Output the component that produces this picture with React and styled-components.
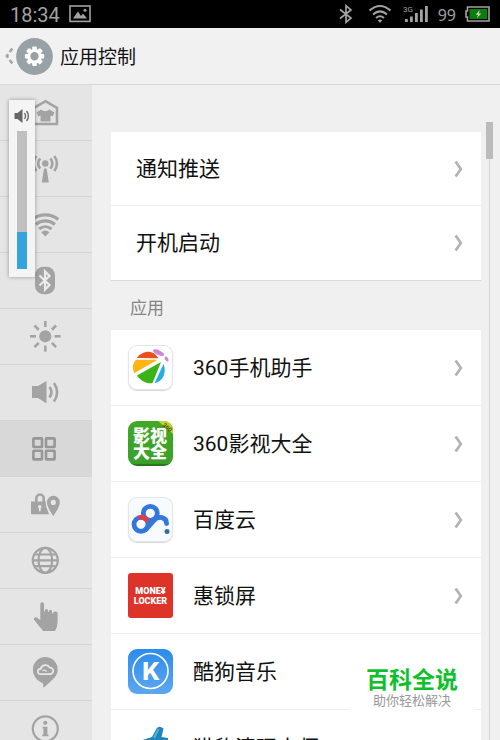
import React, { useState } from 'react'
import styled, { createGlobalStyle } from 'styled-components'

const GlobalStyle = createGlobalStyle`
    * {
        box-sizing: border-box;
    }
    body {
        margin: 0;
        background-color: #f0f0f0;
        font-family: Roboto, "Noto Sans CJK SC", sans-serif;
    }
    button {
        border: none;
        padding: 0;
        background: none;
        font: inherit;
        color: inherit;
        cursor: pointer;
    }
    svg {
        display: block;
        flex-shrink: 0;
    }
`

const Container = styled.div`
    position: relative;
    height: 100vh;
    display: flex;
    flex-direction: column;
    overflow: hidden;
`

const StatusBar = styled.div`
    height: 28px;
    flex-shrink: 0;
    padding: 0 10px;
    display: flex;
    align-items: center;
    justify-content: space-between;
    background-color: #000;
    color: #a2a2a2;
`

const StatusGroup = styled.div`
    display: flex;
    align-items: center;
    gap: ${props => props.gap};
`

const Clock = styled.span`
    padding-top: 2px;
    font-size: 20px;
    line-height: 26px;
`

const Percent = styled.span`
    padding-top: 2px;
    font-family: "Noto Sans", sans-serif;
    font-size: 16px;
    line-height: 26px;
`

const Header = styled.header`
    height: 57px;
    flex-shrink: 0;
    padding-left: 5px;
    display: flex;
    align-items: center;
    background-color: #f1f1f1;
    border-bottom: 1px solid #d8d8d8;
`

const BackButton = styled.button`
    display: flex;
    align-items: center;
    gap: 2px;
`

const Title = styled.h1`
    margin: 0;
    padding: 4px 0 0 7px;
    font-size: 19px;
    line-height: 28px;
    font-weight: 400;
    color: #111;
`

const Body = styled.div`
    flex: 1;
    min-height: 0;
    display: flex;
    overflow: hidden;
`

const Sidebar = styled.nav`
    width: 92px;
    flex-shrink: 0;
    background-color: #e5e5e5;
`

const SideButton = styled.button`
    width: 100%;
    height: 56px;
    padding-bottom: 1px;
    display: flex;
    align-items: center;
    justify-content: center;
    color: ${props => props.$active ? "#979797" : "#a3a3a3"};
    background-color: ${props => props.$active ? "#d8d8d8" : "transparent"};
    border-bottom: 1px solid #d5d5d5;
`

const Main = styled.main`
    flex: 1;
    min-width: 0;
    padding: 47px 0 0 19px;
`

const Card = styled.div`
    background-color: #fff;
    border-bottom: 1px solid #d9d9d9;
`

const Row = styled.button`
    width: 100%;
    height: ${props => props.$tall ? "76px" : "74px"};
    padding: ${props => props.$tall ? "0 18px 0 17px" : "0 18px 0 25px"};
    display: flex;
    align-items: center;
    gap: 20px;
    text-align: left;
    font-size: 21px;
    line-height: 30px;
    color: #111;

    &:not(:last-child) {
        border-bottom: 1px solid #ededed;
    }
`

const RowText = styled.span`
    flex: 1;
    white-space: nowrap;
`

const SectionTitle = styled.h2`
    margin: 0;
    padding: 5px 0 0 19px;
    font-size: 17px;
    line-height: 44px;
    font-weight: 400;
    color: #858585;
`

const ScrollTrack = styled.div`
    width: 19px;
    margin-top: 37px;
    padding-right: 2px;
    flex-shrink: 0;
    display: flex;
    flex-direction: column;
    align-items: center;
`

const ScrollThumb = styled.div`
    width: 7px;
    height: 37px;
    background-color: #bbb;
`

const ScrollLine = styled.div`
    width: 1px;
    flex: 1;
    background-color: #d6d6d6;
`

const AppIcon = styled.span`
    width: 45px;
    height: 45px;
    flex-shrink: 0;
    display: flex;
    flex-direction: column;
    align-items: center;
    justify-content: center;
    overflow: hidden;
    border-radius: ${props => props.$radius || "9px"};
    background: ${props => props.$bg};
    box-shadow: ${props => props.$outlined ? "inset 0 0 0 1px #e2e5ea, 0 1px 1px #d8d8d8" : "none"};
    color: #fff;
    font-size: 9px;
    line-height: 10px;
    font-weight: 900;
`

const VolumePanel = styled.div`
    position: absolute;
    left: 9px;
    top: 100px;
    width: 26px;
    height: 177px;
    padding-top: 8px;
    display: flex;
    flex-direction: column;
    align-items: center;
    gap: 7px;
    background-color: #f4f4f4;
    border-radius: 1px;
    box-shadow: 0 0 4px rgba(0, 0, 0, 0.35);
    color: #666;
`

const VolumeRange = styled.input`
    appearance: none;
    writing-mode: vertical-lr;
    direction: rtl;
    width: 10px;
    height: 138px;
    margin: 0;

    &::-webkit-slider-thumb {
        appearance: none;
        width: 10px;
        height: 1px;
        background: transparent;
    }
`

const Watermark = styled.div`
    position: absolute;
    right: 25px;
    bottom: 0;
    width: 126px;
    height: 80px;
    padding-top: 4px;
    background-color: #fff;
    text-align: center;
    font-family: "Noto Sans CJK SC", sans-serif;
    pointer-events: none;
`

const WatermarkTitle = styled.div`
    font-size: 23px;
    line-height: 28px;
    font-weight: 700;
    color: #0fbf2c;
`

const WatermarkText = styled.div`
    font-size: 13px;
    line-height: 16px;
    color: #999;
`

const stroke = { fill: "none", stroke: "currentColor", strokeWidth: 2.6 }

const sideIcons = [
    {
        id: "theme",
        label: "主题",
        icon: <>
            <path d="M16.5 5.2L28 12V28H5V12Z" {...stroke} />
            <path d="M12 13.5Q16.3 17 20.5 13.5L25.5 16.5L23.5 20.5L21.5 19.5V25.5H11.5V19.5L9.5 20.5L7.5 16.5Z" fill="currentColor" />
        </>
    },
    {
        id: "network",
        label: "移动网络",
        icon: <>
            <circle cx="16.3" cy="11.5" r="3.2" fill="currentColor" />
            <path d="M15 16.5H17.6L19.8 30.5H12.8Z" fill="currentColor" />
            <path d="M11.3 6.5A7 7 0 0 0 11.3 16.5M21.3 6.5A7 7 0 0 1 21.3 16.5M7.3 4A12 12 0 0 0 7.3 19M25.3 4A12 12 0 0 1 25.3 19" {...stroke} />
        </>
    },
    {
        id: "wifi",
        label: "WLAN",
        icon: <>
            <path d="M3.4 11.5A20.5 20.5 0 0 1 29.2 11.5M6.7 16.4A15 15 0 0 1 25.9 16.4M10.1 20.9A10 10 0 0 1 22.5 20.9" {...stroke} strokeWidth="3.2" />
            <path d="M16.3 28.5L12.2 24.2A6 6 0 0 1 20.4 24.2Z" fill="currentColor" />
        </>
    },
    {
        id: "bluetooth",
        label: "蓝牙",
        icon: <>
            <rect x="6" y="2.8" width="20" height="27.4" rx="8.5" fill="currentColor" />
            <path d="M10.5 11.5L20.5 21L16 25.5V7.5L20.5 12L10.5 21.5" fill="none" stroke="#ececec" strokeWidth="2.2" />
        </>
    },
    {
        id: "display",
        label: "显示",
        icon: <>
            <circle cx="16.3" cy="16.3" r="6.1" fill="currentColor" />
            {[0, 45, 90, 135, 180, 225, 270, 315].map((deg) => (
                <path key={deg} d="M16.3 1V7" {...stroke} transform={`rotate(${deg} 16.3 16.3)`} />
            ))}
        </>
    },
    {
        id: "sound",
        label: "声音",
        icon: <>
            <path d="M3 10H9L17.5 5V27.5L9 22H3Z" fill="currentColor" />
            <path d="M20.5 11Q24.5 16.2 20.5 21.5M25 7Q31.3 16.2 25 25.5" {...stroke} />
        </>
    },
    {
        id: "apps",
        label: "应用控制",
        active: true,
        icon: <g {...stroke}>
            <rect x="4.4" y="6.4" width="8.6" height="8.6" rx="0.6" />
            <rect x="17" y="6.4" width="8.6" height="8.6" rx="0.6" />
            <rect x="4.4" y="18.8" width="8.6" height="8.6" rx="0.6" />
            <rect x="17" y="18.8" width="8.6" height="8.6" rx="0.6" />
        </g>
    },
    {
        id: "privacy",
        label: "安全与位置",
        icon: <>
            <path d="M2 13.5H16.8Q16.5 18 18.5 22L20 26.3H2Z" fill="currentColor" />
            <path d="M7.3 14V10.5A3.7 4 0 0 1 14.7 10.5V14" {...stroke} />
            <path d="M10.8 17A1.8 1.8 0 0 0 9.9 20.3V23.3H11.7V20.3A1.8 1.8 0 0 0 10.8 17Z" fill="#e5e5e5" />
            <path fillRule="evenodd" d="M24.3 7.8A6.4 6.4 0 0 1 30.8 14.3C30.8 19 26.5 24 24.3 28.3C22 24 18 19 18 14.3A6.4 6.4 0 0 1 24.3 7.8ZM24.3 11.8A2.6 2.6 0 1 0 24.3 17A2.6 2.6 0 1 0 24.3 11.8Z" fill="currentColor" />
        </>
    },
    {
        id: "language",
        label: "语言",
        icon: <g {...stroke} strokeWidth="2.2">
            <circle cx="16.3" cy="16.3" r="12.5" />
            <ellipse cx="16.3" cy="16.3" rx="6.8" ry="12.5" />
            <path d="M4 16.3H29M6 10.5H26.6M6 22.2H26.6" />
        </g>
    },
    {
        id: "gesture",
        label: "手势",
        icon: <path d="M11.3 4A1.8 1.8 0 0 1 15 4V11.5H15.8V10.5A1.6 1.6 0 0 1 19 10.5V12H19.8V11.3A1.6 1.6 0 0 1 23 11.3V13.5H23.8A1.6 1.6 0 0 1 28.6 14.5V22Q28.6 27 26 31H14Q12.5 28.5 10 26L5.2 20C4 17.8 6.5 16.3 8.4 17.7L11.3 20Z" fill="currentColor" />
    },
    {
        id: "cloud",
        label: "云服务",
        icon: <>
            <path d="M16.3 1A12.4 12.4 0 0 1 28.7 13.5C28.7 20 24 23 20 27L14.5 31.8L14 27.5C9 25 3.9 21 3.9 13.5A12.4 12.4 0 0 1 16.3 1Z" fill="currentColor" />
            <path d="M11.5 18.2A2.7 2.7 0 0 1 11.7 12.8A5 5 0 0 1 20.8 11.6A3.3 3.3 0 0 1 21 18.2Z" fill="none" stroke="#e9e9e9" strokeWidth="1.7" />
            <path d="M13.5 14.5Q16 13.5 17.5 15.7" fill="none" stroke="#e9e9e9" strokeWidth="1.3" />
        </>
    },
    {
        id: "about",
        label: "关于",
        icon: <>
            <circle cx="16.3" cy="16.8" r="12.5" {...stroke} strokeWidth="2.2" />
            <circle cx="16.3" cy="10.8" r="2.1" fill="currentColor" />
            <path d="M13.5 14.8H18.4V22.5H19.5V24.3H13.3V22.5H14.4V16.6H13.5Z" fill="currentColor" />
        </>
    }
]

const settings = ["通知推送", "开机启动"]

const apps = [
    {
        name: "360手机助手",
        icon: <AppIcon $bg="#fff" $outlined>
            <svg width="45" height="45" viewBox="0 0 45 45">
                <path d="M9 13C13 7 22 4.5 27.5 9.5L30.5 13.3Z" fill="#e8501e" />
                <path d="M8.3 14.8L29.5 14.8L6.2 28.2C4 22.5 4.5 18 8.3 14.8Z" fill="#fbb515" />
                <path d="M33 17L9 30.5C13 36.5 20 39.3 24.5 38Z" fill="#3bb316" />
                <path d="M35.5 19L26.5 38.3C35 36.5 39 27.5 35.5 19Z" fill="#25aee6" />
                <ellipse cx="30.5" cy="7.6" rx="6" ry="2.4" transform="rotate(25 30.5 7.6)" fill="#d183dc" />
                <ellipse cx="38.6" cy="14" rx="2.8" ry="1.6" transform="rotate(58 38.6 14)" fill="#d183dc" />
            </svg>
        </AppIcon>
    },
    {
        name: "360影视大全",
        icon: <AppIcon $bg="linear-gradient(#43a826 0%, #3aa02b 94%, #27761d 97%)">
            <svg width="45" height="45" viewBox="0 0 45 45">
                <path d="M30 0H45V13Z" fill="#c3d22f" />
                <g fill="#fff" fontFamily="Noto Sans CJK SC, sans-serif" fontSize="17" fontWeight="900" textAnchor="middle">
                    <text x="22" y="21">影视</text>
                    <text x="22" y="37">大全</text>
                </g>
                <text x="38" y="8" transform="rotate(41 38 8)" fill="#40510f" fontSize="6" fontWeight="700" textAnchor="middle">360</text>
            </svg>
        </AppIcon>
    },
    {
        name: "百度云",
        icon: <AppIcon $bg="#f8fbfd" $outlined>
            <svg width="45" height="45" viewBox="0 0 45 45" fill="none" strokeWidth="4.8" strokeLinecap="round">
                <circle cx="22.3" cy="16.3" r="7" stroke="#3278dc" />
                <circle cx="13" cy="27.3" r="7" stroke="#3278dc" />
                <path d="M18 32.3L26 23.5C31 18 38.5 20.5 38.6 26.5" stroke="#3278dc" />
                <path d="M12.3 20.3Q16.5 19.8 18.6 22.8" stroke="#e23c48" />
                <circle cx="39" cy="34.4" r="2.5" fill="#2f6da8" />
            </svg>
        </AppIcon>
    },
    {
        name: "惠锁屏",
        icon: <AppIcon $bg="#dd3329" $radius="3px">
            <span>MONE¥</span>
            <span>LOCKER</span>
        </AppIcon>
    },
    {
        name: "酷狗音乐",
        icon: <AppIcon $bg="linear-gradient(#2b8ceb, #5ea7f0)">
            <svg width="45" height="45" viewBox="0 0 45 45">
                <circle cx="22.5" cy="22" r="17.5" fill="none" stroke="#fff" strokeWidth="1.6" />
                <text x="23" y="31" fill="#fff" fontFamily="Inter, sans-serif" fontSize="24" fontWeight="800" textAnchor="middle">K</text>
            </svg>
        </AppIcon>
    },
    {
        name: "猎豹清理大师",
        icon: <AppIcon $bg="#fff">
            <svg width="45" height="45" viewBox="0 0 45 45">
                <path d="M13 14.5L24 11L28.5 2.5Q31 -1 35.5 2.5L33.5 11L40 12L42 40H12Z" fill="#1f86ba" />
                <path d="M26 12L30.5 3" stroke="#54b3dc" strokeWidth="2" />
            </svg>
        </AppIcon>
    }
]

function Chevron() {
    return (
        <svg width="9" height="18" viewBox="0 0 9 18">
            <path d="M1.6 1.5L6.8 9L1.6 16.5" fill="none" stroke="#b4b4b4" strokeWidth="2.8" />
        </svg>
    )
}

function Status() {
    return (
        <StatusBar>
            <StatusGroup gap="9px">
                <Clock>18:34</Clock>
                <svg width="22" height="18" viewBox="0 0 22 18">
                    <rect x="1" y="1" width="20" height="15.4" fill="none" stroke="currentColor" strokeWidth="1.6" />
                    <path d="M4 13.5L9 6.5L12 11L14 8.5L18 13.5Z" fill="currentColor" />
                    <circle cx="16" cy="5.3" r="1.5" fill="currentColor" />
                </svg>
            </StatusGroup>
            <StatusGroup gap="9px">
                <svg width="14" height="20" viewBox="0 0 14 20">
                    <path d="M1 5.5L12 14L7 18.3V1.7L12 6L1 14.5" fill="none" stroke="currentColor" strokeWidth="1.7" />
                </svg>
                <svg width="32" height="20" viewBox="-7 0 32 20">
                    <path d="M0.5 6.5Q11 -2.5 21.5 6.5M4 10.5Q11 4.2 18 10.5M7 14Q11 10.6 15 14" fill="none" stroke="currentColor" strokeWidth="2" />
                    <path d="M8.8 16.2Q11 14.8 13.2 16.2L11 19Z" fill="currentColor" />
                </svg>
                <svg width="26" height="18" viewBox="0 0 26 18" fill="currentColor">
                    <text x="0" y="7" fontSize="8">3G</text>
                    <path d="M2 14H4.8V17H2ZM7 11.5H9.8V17H7ZM12 8H14.8V17H12ZM17 4.5H19.8V17H17ZM22 1H24.8V17H22Z" />
                </svg>
                <Percent>99</Percent>
                <svg width="25" height="16" viewBox="0 0 25 16">
                    <path d="M2.5 1H24V15H2.5V11H1V5H2.5Z" fill="#000" stroke="currentColor" strokeWidth="1.6" />
                    <rect x="4.5" y="3" width="17.5" height="10" fill="#0b7d0b" />
                    <path d="M14.8 3.8L10.8 8.8H13.2L11.8 12.3L16.3 7.4H13.8Z" fill="#c4d8c4" />
                </svg>
            </StatusGroup>
        </StatusBar>
    )
}

export default function App() {

    const [volume, setVolume] = useState(27)

    return (
        <Container>
            <GlobalStyle />
            <Status />

            <Header>
                <BackButton aria-label="返回">
                    <svg width="9" height="18" viewBox="0 0 9 18">
                        <path d="M7.3 1.5L1.8 9L7.3 16.5" fill="none" stroke="#a6a6a6" strokeWidth="2.6" strokeDasharray="4.4 2.7" />
                    </svg>
                    <svg width="37" height="37" viewBox="0 0 37 37">
                        <circle cx="18.5" cy="18.5" r="18.4" fill="#98a1a6" />
                        {[0, 45, 90, 135, 180, 225, 270, 315].map((deg) => (
                            <rect key={deg} x="16.2" y="8.6" width="4.6" height="4.5" rx="1" fill="#fff" transform={`rotate(${deg} 18.5 18.3)`} />
                        ))}
                        <circle cx="18.5" cy="18.3" r="5.8" fill="none" stroke="#fff" strokeWidth="3.2" />
                    </svg>
                </BackButton>
                <Title>应用控制</Title>
            </Header>

            <Body>
                <Sidebar>
                    {sideIcons.map((item) => (
                        <SideButton key={item.id} $active={item.active} aria-label={item.label}>
                            <svg width="34" height="32" viewBox="0 0 34 32">{item.icon}</svg>
                        </SideButton>
                    ))}
                </Sidebar>

                <Main>
                    <Card>
                        {settings.map((name) => (
                            <Row key={name}>
                                <RowText>{name}</RowText>
                                <Chevron />
                            </Row>
                        ))}
                    </Card>
                    <SectionTitle>应用</SectionTitle>
                    <Card>
                        {apps.map((app) => (
                            <Row key={app.name} $tall>
                                {app.icon}
                                <RowText>{app.name}</RowText>
                                <Chevron />
                            </Row>
                        ))}
                    </Card>
                </Main>

                <ScrollTrack>
                    <ScrollThumb />
                    <ScrollLine />
                </ScrollTrack>
            </Body>

            <VolumePanel>
                <svg width="16" height="16" viewBox="0 0 16 16">
                    <path d="M0.5 5H3.5L8.5 1V15L3.5 11H0.5Z" fill="currentColor" />
                    <path d="M10.5 5.2Q12.6 8 10.5 10.8M12.6 3Q16.2 8 12.6 13" fill="none" stroke="currentColor" strokeWidth="1.3" />
                </svg>
                <VolumeRange
                    type="range"
                    min="0"
                    max="100"
                    aria-label="音量"
                    value={volume}
                    onChange={(e) => setVolume(Number(e.target.value))}
                    style={{ background: `linear-gradient(to top, #35a3dd ${volume}%, #c0c0c0 ${volume}%)` }}
                />
            </VolumePanel>

            <Watermark>
                <WatermarkTitle>百科全说</WatermarkTitle>
                <WatermarkText>助你轻松解决</WatermarkText>
            </Watermark>
        </Container>
    )
}
